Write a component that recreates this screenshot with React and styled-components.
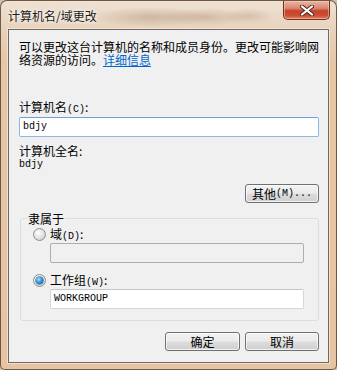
import React from "react";
import styled, { createGlobalStyle } from "styled-components";

const Global = createGlobalStyle`
  html, body { margin: 0; padding: 0; background: #cfbfae; }
  #root { width: 337px; height: 370px; }
  * { box-sizing: border-box; }
`;

const CJK = `"Noto Sans CJK SC", "Noto Sans", sans-serif`;
const MONO = `"Liberation Mono", "DejaVu Sans Mono", monospace`;

const Window = styled.div`
  position: relative;
  width: 337px;
  height: 370px;
  border: 1px solid rgba(70, 50, 30, 0.75);
  border-radius: 7px 7px 5px 5px;
  background:
    radial-gradient(ellipse 60px 10px at 150px 16px, rgba(150, 120, 95, 0.35), transparent),
    radial-gradient(ellipse 45px 9px at 205px 16px, rgba(150, 120, 95, 0.3), transparent),
    radial-gradient(ellipse 25px 8px at 248px 15px, rgba(150, 120, 95, 0.25), transparent),
    linear-gradient(180deg, #efe2d4 0px, #e8d2bc 28px, #e7c6a6 60px, #e6c4a3 100%);
  display: flex;
  flex-direction: column;
  font-family: ${CJK};
  font-size: 12px;
  color: #000;
  overflow: hidden;
`;

const TitleBar = styled.div`
  height: 28px;
  flex: none;
  display: flex;
  align-items: flex-start;
  padding-left: 7px;
`;

const Title = styled.div`
  margin-top: 8px;
  font-size: 12px;
  line-height: 14px;
  color: #1a1a1a;
  text-shadow: 0 0 6px rgba(255, 255, 255, 0.9), 0 0 3px rgba(255, 255, 255, 0.9);
  flex: 1;
`;

const CloseButton = styled.div`
  width: 47px;
  height: 19px;
  margin-right: 6px;
  border: 1px solid #6a3326;
  border-top: none;
  border-radius: 0 0 5px 5px;
  background: linear-gradient(180deg, #eab6a6 0%, #dd8670 40%, #c5432a 55%, #cc4d33 80%, #e08466 100%);
  box-shadow: inset 0 0 0 1px rgba(255, 210, 190, 0.5);
  display: flex;
  align-items: center;
  justify-content: center;
`;

const Client = styled.div`
  flex: none;
  height: 334px;
  margin: 0 7px;
  border: 1px solid #6e6a66;
  box-shadow: 0 0 0 1px rgba(255, 240, 225, 0.6);
  background: #f0f0f0;
  padding: 0 9px 0 10px;
  display: flex;
  flex-direction: column;
`;

const Desc = styled.div`
  margin-top: 10px;
  line-height: 13px;
  white-space: nowrap;
`;

const Link = styled.a`
  color: #0066cc;
  text-decoration: underline;
  cursor: pointer;
`;

const Label = styled.div`
  margin-top: ${(p) => p.$mt || 0}px;
  height: 13px;
  line-height: 13px;
  white-space: nowrap;
`;

const Mono = styled.span`
  font-family: ${MONO};
  font-size: 10px;
  line-height: 1;
`;

const Value = styled.div`
  margin-top: 1px;
  height: 13px;
  line-height: 13px;
  font-family: ${MONO};
  font-size: 10px;
`;

const TextBox = styled.div`
  flex: none;
  margin-top: ${(p) => p.$mt || 0}px;
  margin-left: ${(p) => p.$ml || 0}px;
  width: ${(p) => p.$w}px;
  height: 20px;
  border: 1px solid ${(p) => (p.$disabled ? "#aeaeae" : p.$focus ? "#8bb8e6" : "#d3d8de")};
  ${(p) => p.$focus && "border-top-color: #6f9fd6;"}
  ${(p) => !p.$disabled && !p.$focus && "border-top-color: #c3c6cb;"}
  border-radius: 2px;
  background: ${(p) => (p.$disabled ? "#f0f0f0" : "#fff")};
  padding-left: 3px;
  line-height: 18px;
  font-family: ${MONO};
  font-size: 10px;
`;

const ButtonRow = styled.div`
  flex: none;
  margin-top: ${(p) => p.$mt || 0}px;
  display: flex;
  justify-content: flex-end;
  gap: 5px;
`;

const Button = styled.div`
  width: ${(p) => p.$w || 74}px;
  height: ${(p) => p.$h || 19}px;
  border: 1px solid #707070;
  border-radius: 3px;
  background: linear-gradient(180deg, #f2f2f2 0%, #ebebeb 48%, #dddddd 52%, #cfcfcf 100%);
  box-shadow: inset 0 0 0 1px rgba(255, 255, 255, 0.7);
  display: flex;
  align-items: center;
  justify-content: center;
  font-size: 12px;
  line-height: 13px;
  white-space: nowrap;
`;

const Group = styled.fieldset`
  flex: none;
  margin: 9px 0 0 1px;
  width: 299px;
  border: 1px solid #d5dfe5;
  border-radius: 3px;
  padding: 0 0 11px 6px;
`;

const Legend = styled.legend`
  padding: 0 1px;
  height: 13px;
  line-height: 13px;
`;

const GroupInner = styled.div`
  padding-left: 6px;
  display: flex;
  flex-direction: column;
`;

const RadioRow = styled.div`
  margin-top: ${(p) => p.$mt || 0}px;
  display: flex;
  align-items: center;
  gap: 4px;
  height: 13px;
  line-height: 13px;
`;

const Radio = styled.span`
  width: 13px;
  height: 13px;
  border-radius: 50%;
  border: 1px solid #8c8f92;
  background: radial-gradient(circle at 40% 35%, #ffffff 0%, #e6e6e6 45%, #c4c4c4 100%);
  display: flex;
  align-items: center;
  justify-content: center;
  flex: none;
`;

const Dot = styled.span`
  width: 7px;
  height: 7px;
  border-radius: 50%;
  background: radial-gradient(circle at 40% 35%, #a6ecff 0%, #2a9be0 45%, #0b4c93 100%);
  box-shadow: 0 0 0 0.5px #0b3f78;
`;

export default function App() {
  return (
    <>
      <Global />
      <Window>
        <TitleBar>
          <Title>计算机名/域更改</Title>
          <CloseButton>
            <svg width="14" height="11" viewBox="0 0 14 11">
              <path
                d="M2 1.5 L12 9.5 M12 1.5 L2 9.5"
                stroke="#4a2a22"
                strokeWidth="4"
                strokeLinecap="round"
              />
              <path
                d="M2 1.5 L12 9.5 M12 1.5 L2 9.5"
                stroke="#ffffff"
                strokeWidth="2.2"
                strokeLinecap="round"
              />
            </svg>
          </CloseButton>
        </TitleBar>
        <Client>
          <Desc>
            可以更改这台计算机的名称和成员身份。更改可能影响网
            <br />
            络资源的访问。<Link>详细信息</Link>
          </Desc>
          <Label $mt={34}>
            计算机名<Mono>(C)</Mono>:
          </Label>
          <TextBox $mt={4} $w={300} $focus>
            bdjy
          </TextBox>
          <Label $mt={7}>计算机全名:</Label>
          <Value>bdjy</Value>
          <ButtonRow $mt={13}>
            <Button $w={74}>
              其他<Mono>(M)...</Mono>
            </Button>
          </ButtonRow>
          <Group>
            <Legend>隶属于</Legend>
            <GroupInner>
              <RadioRow $mt={3}>
                <Radio />
                <span>
                  域<Mono>(D)</Mono>:
                </span>
              </RadioRow>
              <TextBox $mt={2} $ml={17} $w={254} $disabled />
              <RadioRow $mt={11}>
                <Radio>
                  <Dot />
                </Radio>
                <span>
                  工作组<Mono>(W)</Mono>:
                </span>
              </RadioRow>
              <TextBox $mt={2} $ml={17} $w={254}>
                WORKGROUP
              </TextBox>
            </GroupInner>
          </Group>
          <ButtonRow $mt={11}>
            <Button $w={75} $h={19}>
              确定
            </Button>
            <Button $w={74} $h={19}>
              取消
            </Button>
          </ButtonRow>
        </Client>
      </Window>
    </>
  );
}
